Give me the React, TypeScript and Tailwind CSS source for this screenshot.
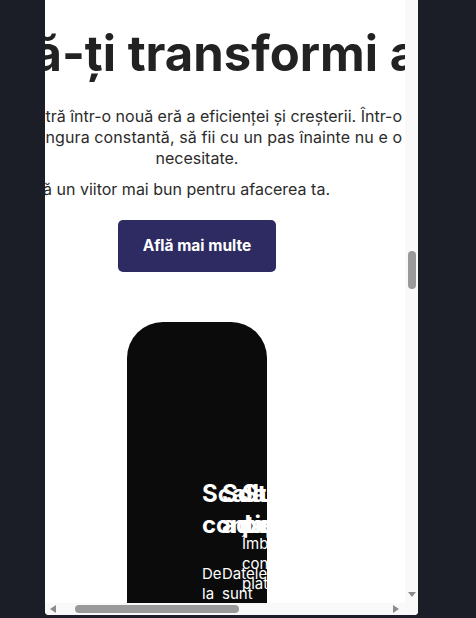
const font = "font-['Inter','Liberation_Sans',sans-serif]";

const Slide = ({
  left,
  title,
  desc,
  descTop,
}: {
  left: string;
  title: string[];
  desc: string[];
  descTop: string;
}) => (
  <>
    <div className={`absolute top-[156px] ${left} text-[24px] leading-[31px] font-bold text-white whitespace-nowrap`}>
      {title.map((t) => (
        <div key={t}>{t}</div>
      ))}
    </div>
    <div className={`absolute ${descTop} ${left} text-[15px] leading-[20px] text-white whitespace-nowrap`}>
      {desc.map((d) => (
        <div key={d}>{d}</div>
      ))}
    </div>
  </>
);

const App = () => {
  return (
    <div className={`h-[618px] w-[476px] overflow-hidden bg-[#1c1e27] ${font}`}>
      <div className="ml-[45px] flex h-[615px] w-[373px] flex-col overflow-hidden rounded-b-[4px] bg-white">
        <div className="flex h-[603px]">
          {/* page content, scrolled sideways */}
          <div className="flex w-[360px] flex-col overflow-hidden text-[#2b2b2b]">
            <h1 className="-ml-[39px] whitespace-nowrap pt-[30px] text-[49px] font-bold leading-[48px] text-[#222222]">
              să-ți transformi afacerea
            </h1>

            <div className="mt-[28px] text-[16px] leading-[21px]">
              <div className="flex w-[357px] justify-end">
                <span className="whitespace-nowrap">Intră într-o nouă eră a eficienței și creșterii. Într-o</span>
              </div>
              <div className="-ml-[12px] whitespace-nowrap tracking-[0.1px]">
                singura constantă, să fii cu un pas înainte nu e o opțiune, ci o
              </div>
              <div className="w-[304px] text-center">necesitate.</div>
              <div className="mt-[10px] flex w-[285px] justify-end">
                <span className="whitespace-nowrap">Construiește împreună un viitor mai bun pentru afacerea ta.</span>
              </div>
            </div>

            <div className="flex w-[304px] justify-center pt-[20px]">
              <button className="h-[52px] w-[158px] rounded-[5px] bg-[#2e2b62] text-[15.5px] font-bold text-white">
                Află mai multe
              </button>
            </div>

            <div className="flex w-[304px] justify-center pt-[50px]">
              <div className="relative h-[320px] w-[140px] shrink-0 overflow-hidden rounded-t-[36px] bg-[#0b0b0b]">
                <Slide
                  left="left-[75px]"
                  title={["Scalare", "continuă"]}
                  desc={["De", "la", "idee"]}
                  descTop="top-[242px]"
                />
                <Slide
                  left="left-[95px]"
                  title={["Soluții", "adaptate"]}
                  desc={["Datele", "sunt"]}
                  descTop="top-[242px]"
                />
                <Slide
                  left="left-[115px]"
                  title={["Strategii", "personale"]}
                  desc={["Îmbunătățește", "conversia", "platformei"]}
                  descTop="top-[212px]"
                />
              </div>
            </div>
          </div>

          {/* vertical scrollbar */}
          <div className="flex w-[13px] flex-col bg-[#f9f9f9]">
            <div className="ml-[3px] mt-[251px] h-[38px] w-[8px] rounded-full bg-[#9a9a9a]" />
            <div className="flex-1" />
            <svg width="13" height="7" viewBox="0 0 13 7" className="mb-[5px]">
              <polygon points="3,1 11,1 7,6" fill="#8c8c8c" />
            </svg>
          </div>
        </div>

        {/* horizontal scrollbar */}
        <div className="flex h-[12px] items-center bg-[#f9f9f9]">
          <svg width="30" height="12" viewBox="0 0 30 12">
            <polygon points="11,2 11,10 5,6" fill="#8c8c8c" />
          </svg>
          <div className="h-[8px] w-[164px] rounded-full bg-[#9a9a9a]" />
          <div className="w-[154px]" />
          <svg width="12" height="12" viewBox="0 0 12 12">
            <polygon points="0,2 0,10 6,6" fill="#8c8c8c" />
          </svg>
        </div>
      </div>
    </div>
  );
};

export default App;
